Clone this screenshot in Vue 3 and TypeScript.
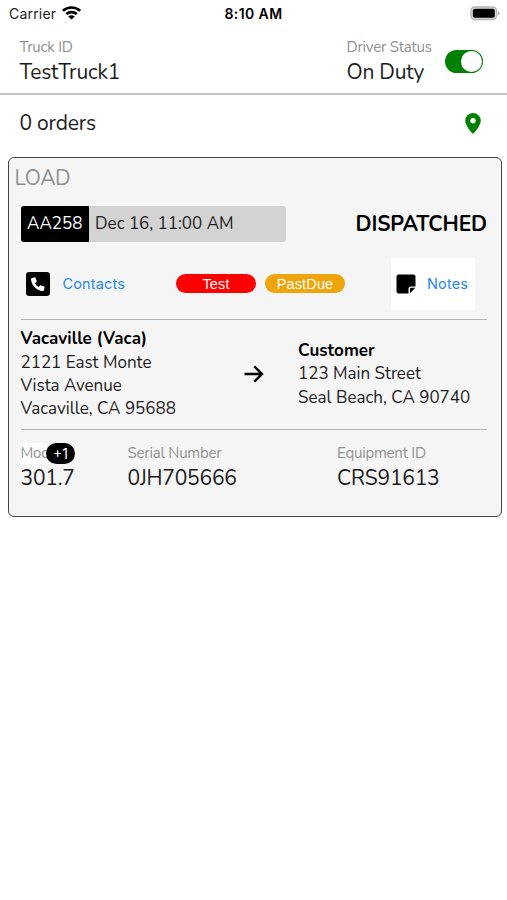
<script setup lang="ts">
const truck = { id: 'TestTruck1', status: 'On Duty', orders: 0 }
const load = {
  code: 'AA258',
  time: 'Dec 16, 11:00 AM',
  state: 'DISPATCHED',
  model: '301.7',
  serial: '0JH705666',
  equipment: 'CRS91613',
}
</script>

<template>
  <main class="screen">
    <div class="statusbar">
      <div class="carrier">
        <span>Carrier</span>
        <svg width="19" height="14" viewBox="0 0 18 14" preserveAspectRatio="none" fill="none" stroke="#000" stroke-width="2.7">
          <path d="M.8 4.8C5.5.4 12.5.4 17.2 4.8" />
          <path d="M4 8.1C6.8 5.4 11.2 5.4 14 8.1" />
          <path d="M9 13.5 5.9 10.4C7.7 8.8 10.3 8.8 12.1 10.4Z" fill="#000" stroke="none" />
        </svg>
      </div>
      <div class="clock">8:10 AM</div>
      <svg class="battery" width="31" height="15" viewBox="0 0 31 15">
        <rect x="1" y="1" width="25.5" height="12.5" rx="3.8" fill="#ddd" stroke="#b5b5b5" stroke-width="1.4" />
        <rect x="2.8" y="2.8" width="22" height="9" rx="2" fill="#000" />
        <path d="M28 5.2c2.2.8 2.2 3.4 0 4.2z" fill="#aaa" />
      </svg>
    </div>

    <header class="header">
      <div class="field truck">
        <span class="label">Truck ID</span>
        <span class="value">{{ truck.id }}</span>
      </div>
      <div class="field driver">
        <span class="label">Driver Status</span>
        <span class="value">{{ truck.status }}</span>
      </div>
      <button class="toggle" aria-label="Driver Status"><span class="knob"></span></button>
    </header>

    <div class="orders">
      <span class="value count">{{ truck.orders }} orders</span>
      <svg width="16" height="21" viewBox="0 0 16 21">
        <path fill="#008000" fill-rule="evenodd" d="M8 0a7.8 7.8 0 0 0-7.8 7.8C.2 13.2 8 21 8 21s7.8-7.8 7.8-13.2A7.8 7.8 0 0 0 8 0Zm0 5.1a2.7 2.7 0 1 1 0 5.4 2.7 2.7 0 0 1 0-5.4Z" />
      </svg>
    </div>

    <section class="card">
      <h2 class="title">LOAD</h2>
      <div class="body">
        <div class="summary">
          <div class="slot">
            <span class="code">{{ load.code }}</span>
            <span class="time">{{ load.time }}</span>
          </div>
          <strong class="state">{{ load.state }}</strong>
        </div>

        <div class="actions">
          <a class="contacts">
            <svg width="24" height="24" viewBox="0 0 24 24">
              <rect width="24" height="24" rx="3.2" fill="#000" />
              <path fill="#fff" d="M5.6 6.2 8.5 5.3c.5-.1.8.1 1 .6l1.2 3c.1.4 0 .7-.3 1L9 11.2c.9 1.7 2.1 2.9 3.8 3.8l1.3-1.4c.3-.3.6-.4 1-.2l3 1.2c.5.2.7.5.5 1l-.8 2.8c-.1.5-.4.7-.9.7C10.9 19 5.1 13.2 5 7.1c0-.5.2-.8.6-.9Z" />
            </svg>
            <span>Contacts</span>
          </a>
          <span class="tag test">Test</span>
          <span class="tag due">PastDue</span>
          <a class="notes">
            <svg width="20" height="20" viewBox="0 0 20 20">
              <path d="M2.5.5h15a2 2 0 0 1 2 2V12.500H15a2.500 2.500 0 0 0-2.500 2.500v4.500h-10a2 2 0 0 1-2-2v-15a2 2 0 0 1 2-2Z" />
              <path d="M15.300 13.700h4L14 19.300v-4.200c0-.8.500-1.400 1.300-1.400Z" />
            </svg>
            <span>Notes</span>
          </a>
        </div>

        <div class="route">
          <address class="from">
            <strong>Vacaville (Vaca)</strong>
            <span>2121 East Monte</span>
            <span>Vista Avenue</span>
            <span>Vacaville, CA 95688</span>
          </address>
          <svg class="arrow" width="20" height="18" viewBox="0 0 20 18" fill="none" stroke="#000" stroke-width="2.5">
            <path d="M.5 9H18M10.3 1.3 18 9l-7.7 7.7" />
          </svg>
          <address class="to">
            <strong>Customer</strong>
            <span>123 Main Street</span>
            <span>Seal Beach, CA 90740</span>
          </address>
        </div>

        <div class="equipment">
          <div class="field model">
            <span class="label">Mod</span>
            <span class="value">{{ load.model }}</span>
            <span class="badge">+1</span>
          </div>
          <div class="field serial">
            <span class="label">Serial Number</span>
            <span class="value">{{ load.serial }}</span>
          </div>
          <div class="field equip">
            <span class="label">Equipment ID</span>
            <span class="value">{{ load.equipment }}</span>
          </div>
        </div>
      </div>
    </section>
  </main>
</template>

<style>
body { background: #fff; }
</style>

<style scoped>
* { box-sizing: border-box; }
.screen { width: 507px; height: 900px; background: #fff; color: #1c1c1c; font-family: Nunito, Lato, sans-serif; white-space: nowrap; overflow: hidden; }
svg { display: block; flex: none; }
.statusbar { height: 28px; display: grid; grid-template-columns: 1fr auto 1fr; align-items: center; padding: 0 6px 1px 9px; font: 14px/21px Inter, sans-serif; color: #222; }
.carrier { display: flex; align-items: center; gap: 6px; letter-spacing: .2px; }
.carrier svg { margin-top: -2px; }
.clock { font-weight: 600; color: #000; letter-spacing: .4px; margin-right: 3px; }
.battery { justify-self: end; margin-top: -1px; }
.header { height: 67px; display: flex; border-bottom: 2px solid #c4c4c4; padding: 9px 24px 0 19.5px; }
.field { display: flex; flex-direction: column; }
.label { font-size: 15px; line-height: 21px; color: #919191; letter-spacing: -.22px; }
.value { font-size: 21px; line-height: 29px; letter-spacing: -.2px; }
.driver { margin-left: auto; width: 98.5px; }
.toggle { width: 38px; height: 23px; margin: 13px 0 0; padding: 1px; border: 0; border-radius: 12px; background: #008000; display: flex; justify-content: flex-end; }
.knob { width: 21px; height: 21px; border-radius: 50%; background: #fff; }
.orders { height: 62px; display: flex; align-items: center; justify-content: space-between; padding: 0 26px 6px 19.5px; }
.card { margin: 0 5px 0 8px; height: 360px; border: 1.5px solid #444; border-radius: 6px; background: #f5f5f5; padding: 6px 14px 0 5.5px; }
.title { margin: 0; font-size: 21px; line-height: 28px; font-weight: 400; color: #919191; letter-spacing: -.4px; }
.body { margin-left: 6px; padding-top: 14px; }
.summary { display: flex; justify-content: space-between; align-items: center; height: 36px; }
.slot { width: 265.5px; height: 36px; display: flex; align-items: center; background: #d3d3d3; border-radius: 3px; overflow: hidden; font-size: 17px; line-height: 35px; }
.code { width: 68.5px; height: 36px; background: #000; color: #fff; padding-left: 6.5px; }
.time { padding-left: 6px; height: 36px; }
.state { font-size: 21px; letter-spacing: -.1px; color: #000; }
.actions { display: flex; align-items: center; height: 78px; padding: 6px 0 0; border-bottom: 1px solid #b5b5b5; font-family: Inter, sans-serif; font-size: 14.5px; }
.contacts { display: flex; align-items: center; gap: 12.5px; width: 155.5px; padding-left: 5.5px; color: #2687ed; letter-spacing: .15px; }
.contacts span, .notes span { margin-top: -1px; }
.tag { width: 80px; height: 19px; border-radius: 10px; text-align: center; line-height: 20px; color: #fff; font-family: "Liberation Sans", sans-serif; font-size: 14.5px; letter-spacing: .15px; }
.test { background: #f00; }
.due { background: #eea40a; margin-left: 9px; }
.notes { height: 52px; width: 84px; margin-left: 46px; padding-left: 5px; background: #fff; display: flex; align-items: center; gap: 11px; color: #2687ed; letter-spacing: .15px; }
.route { height: 110px; display: flex; align-items: center; border-bottom: 1px solid #b5b5b5; padding-bottom: 1px; }
address { display: flex; flex-direction: column; font-style: normal; font-size: 17px; line-height: 23.3px; }
address strong { color: #000; letter-spacing: .05px; }
.from { width: 223.5px; }
.to { margin-left: 34px; }
.equipment { display: flex; padding-top: 13px; }
.model { position: relative; width: 107px; }
.model .label { width: 26px; background: #fff; }
.serial { width: 209.5px; }
.badge { position: absolute; left: 25.5px; top: 0; width: 29px; height: 21px; border-radius: 11px; background: #000; color: #fff; font: 14px/21px Inter, sans-serif; text-align: center; }
</style>
